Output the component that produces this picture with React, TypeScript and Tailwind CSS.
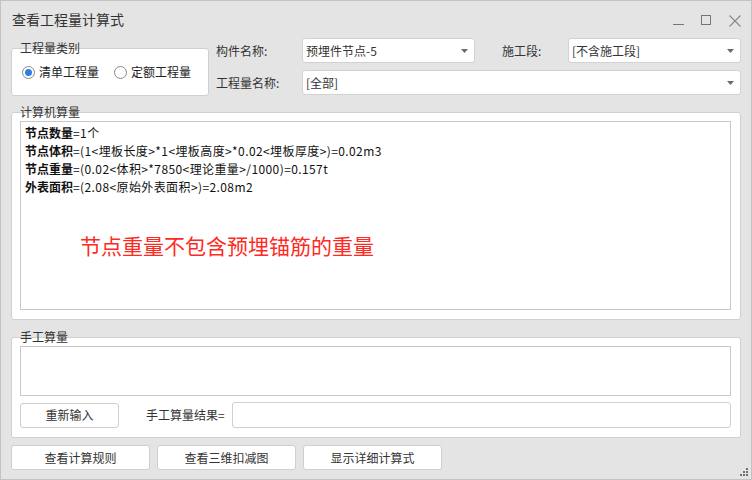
import React from 'react';

const font = { fontFamily: '"Noto Sans CJK SC", "Noto Sans", sans-serif' };

// small dropdown caret
const Caret = () => (
  <svg width="7" height="4" viewBox="0 0 7 4" className="shrink-0">
    <path d="M0 0 H7 L3.5 4 Z" fill="#6b6b6b" />
  </svg>
);

const Select: React.FC<{ value: string; className?: string }> = ({ value, className = '' }) => (
  <div className={`h-[25px] bg-white border border-[#d2d2d2] rounded-[3px] flex items-center pl-[3px] pr-[6px] ${className}`}>
    <span className="flex-1 text-[12px] text-[#333] leading-[17px] whitespace-nowrap overflow-hidden">{value}</span>
    <Caret />
  </div>
);

const Radio: React.FC<{ checked?: boolean; label: string }> = ({ checked, label }) => (
  <div className="flex items-center gap-[4px]">
    <span className="w-[13px] h-[13px] rounded-full border border-[#8a8a8a] bg-white flex items-center justify-center">
      {checked && <span className="w-[7px] h-[7px] rounded-full bg-[#2f7fe3]" />}
    </span>
    <span className="text-[12px] text-[#222] leading-[16px]">{label}</span>
  </div>
);

const Legend: React.FC<{ text: string }> = ({ text }) => (
  <span className="absolute left-[8px] -top-[9px] text-[12px] leading-[16px] text-[#333]">{text}</span>
);

const Btn: React.FC<{ label: string; className?: string }> = ({ label, className = '' }) => (
  <div className={`h-[25px] bg-white border border-[#cfcfcf] rounded-[3px] flex items-center justify-center text-[12px] text-[#333] ${className}`}>
    {label}
  </div>
);

const lines: [string, string][] = [
  ['节点数量', '=1个'],
  ['节点体积', '=(1<埋板长度>*1<埋板高度>*0.02<埋板厚度>)=0.02m3'],
  ['节点重量', '=(0.02<体积>*7850<理论重量>/1000)=0.157t'],
  ['外表面积', '=(2.08<原始外表面积>)=2.08m2'],
];

export default function App() {
  return (
    <div style={font} className="relative w-[752px] h-[480px] bg-[#e4e4e4] border border-[#c3c3c3] flex flex-col">
      {/* title bar */}
      <div className="h-[37px] flex items-center pl-[11px] pr-[10px]">
        <span className="flex-1 text-[14px] text-[#333]">查看工程量计算式</span>
        <div className="flex items-center gap-[17px] pt-[2px]">
          <svg width="11" height="11" viewBox="0 0 11 11">
            <path d="M0 9.5 H11" stroke="#777" strokeWidth="1" />
          </svg>
          <svg width="11" height="11" viewBox="0 0 11 11">
            <rect x="0.5" y="0.5" width="9" height="9" fill="none" stroke="#777" strokeWidth="1" />
          </svg>
          <svg width="12" height="12" viewBox="0 0 12 12">
            <path d="M0.5 0.5 L11.5 11.5 M11.5 0.5 L0.5 11.5" stroke="#888" strokeWidth="1.1" />
          </svg>
        </div>
      </div>

      <div className="px-[10px] flex flex-col">
        {/* top row */}
        <div className="flex h-[58px]">
          <div className="relative w-[198px] h-[48px] mt-[10px] bg-white border border-[#d0d0d0] rounded-[3px] flex items-center pl-[10px] gap-[15px]">
            <Legend text="工程量类别" />
            <Radio checked label="清单工程量" />
            <Radio label="定额工程量" />
          </div>
          <div className="ml-[7px] flex-1 flex flex-col gap-[7px]">
            <div className="flex items-center">
              <span className="w-[86px] text-[12px] text-[#333]">构件名称:</span>
              <Select value="预埋件节点-5" className="w-[173px]" />
              <span className="w-[93px] pl-[27px] text-[12px] text-[#333]">施工段:</span>
              <Select value="[不含施工段]" className="flex-1" />
            </div>
            <div className="flex items-center">
              <span className="w-[86px] text-[12px] text-[#333]">工程量名称:</span>
              <Select value="[全部]" className="flex-1" />
            </div>
          </div>
        </div>

        {/* 计算机算量 */}
        <div className="relative mt-[16px] h-[208px] bg-white border border-[#d0d0d0] rounded-[3px] pt-[8px] pl-[8px] pr-[9px] pb-[9px] flex">
          <Legend text="计算机算量" />
          <div className="flex-1 border border-[#c8c8c8] pl-[4px] pt-[2px] text-[12px] leading-[18px] text-[#111]">
            {lines.map(([b, r]) => (
              <div key={b}>
                <span className="font-bold">{b}</span>
                <span className="tracking-[0.4px]">{r}</span>
              </div>
            ))}
            <div className="mt-[37px] pl-[55px] text-[21px] leading-[24px] text-[#ff2a1f]">节点重量不包含预埋锚筋的重量</div>
          </div>
        </div>

        {/* 手工算量 */}
        <div className="relative mt-[17px] h-[101px] bg-white border border-[#d0d0d0] rounded-[3px] pt-[8px] pl-[8px] pr-[9px] flex flex-col">
          <Legend text="手工算量" />
          <div className="h-[50px] border border-[#c8c8c8]" />
          <div className="mt-[6px] flex items-center">
            <Btn label="重新输入" className="w-[99px]" />
            <span className="w-[113px] pl-[27px] text-[12px] text-[#333]">手工算量结果=</span>
            <div className="flex-1 h-[26px] bg-white border border-[#cfcfcf] rounded-[3px]" />
          </div>
        </div>

        {/* bottom buttons */}
        <div className="mt-[7px] flex gap-[7px]">
          <Btn label="查看计算规则" className="w-[139px]" />
          <Btn label="查看三维扣减图" className="w-[139px]" />
          <Btn label="显示详细计算式" className="w-[139px]" />
        </div>
      </div>

      {/* resize grip */}
      <svg width="9" height="9" viewBox="0 0 9 9" className="absolute right-[2px] bottom-[2px]">
        <rect x="6" y="0" width="2" height="2" fill="#6f6f6f" />
        <rect x="3" y="3" width="2" height="2" fill="#6f6f6f" />
        <rect x="6" y="3" width="2" height="2" fill="#6f6f6f" />
        <rect x="0" y="6" width="2" height="2" fill="#6f6f6f" />
        <rect x="3" y="6" width="2" height="2" fill="#6f6f6f" />
        <rect x="6" y="6" width="2" height="2" fill="#6f6f6f" />
      </svg>
    </div>
  );
}
